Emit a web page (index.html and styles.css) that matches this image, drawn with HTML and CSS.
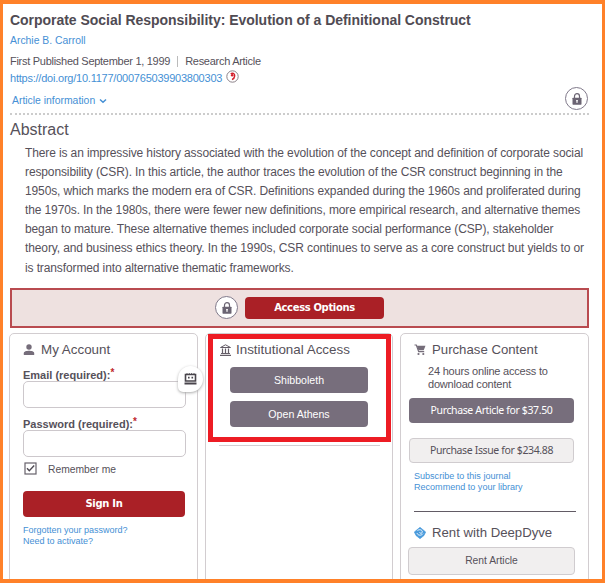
FILE: index.html
```html
<!DOCTYPE html>
<html lang="en">
<head>
<meta charset="utf-8">
<title>Corporate Social Responsibility</title>
<link rel="stylesheet" href="styles.css">
</head>
<body>
<svg width="0" height="0" class="defs">
  <symbol id="lock" viewBox="0 0 10 12"><path d="M2.500 5V3.200a2.500 2.500 0 0 1 5 0V5" fill="none" stroke="#6b6473" stroke-width="1.200"/><rect x=".5" y="4.700" width="9" height="7" rx=".6" fill="#6b6473"/><path d="M5 7v3M4 7.800h2" stroke="#fff" stroke-width="1"/></symbol>
</svg>
<main class="page">
  <h1><span>Corporate Social Responsibility: Evolution of a Definitional Construct</span></h1>
  <a class="author"><span>Archie B. Carroll</span></a>
  <p class="meta"><span class="pub">First Published September 1, 1999</span><i></i><span class="kind">Research Article</span></p>
  <div class="doi"><a>https://doi.org/10.1177/000765039903800303</a>
    <svg width="13" height="13" viewBox="0 0 13 13"><circle cx="6.500" cy="6.500" r="5.700" fill="#fff" stroke="#8b8188" stroke-width="1"/><path d="M4.800 4.200c1.300-1.800 4.200-1 3.900 1.700-.1 1.700-1.200 3-2.700 3.700" fill="none" stroke="#d21f2b" stroke-width="1.400"/><circle cx="6.200" cy="5.200" r="1.300" fill="#d21f2b"/></svg>
  </div>
  <div class="info"><a>Article information</a>
    <svg class="chev" width="8" height="6" viewBox="0 0 8 6"><path d="M1 1.500l3 2.800 3-2.800" fill="none" stroke="#4590d5" stroke-width="1.500"/></svg>
    <span class="lock"><svg width="10" height="12"><use href="#lock"/></svg></span>
  </div>
  <h2><span>Abstract</span></h2>
  <p class="abstract"><span>There is an impressive history associated with the evolution of the concept and definition of corporate social</span><br><span>responsibility (CSR). In this article, the author traces the evolution of the CSR construct beginning in the</span><br><span>1950s, which marks the modern era of CSR. Definitions expanded during the 1960s and proliferated during</span><br><span>the 1970s. In the 1980s, there were fewer new definitions, more empirical research, and alternative themes</span><br><span>began to mature. These alternative themes included corporate social performance (CSP), stakeholder</span><br><span>theory, and business ethics theory. In the 1990s, CSR continues to serve as a core construct but yields to or</span><br><span>is transformed into alternative thematic frameworks.</span></p>
  <div class="bar"><span class="lock"><svg width="10" height="12"><use href="#lock"/></svg></span><button class="access">Access Options</button></div>
  <div class="cards">
    <section class="card account">
      <h3><svg width="12" height="12" viewBox="0 0 12 12"><circle cx="6" cy="3" r="2.700" fill="#756d7a"/><path d="M.8 11V9.200C.8 7.500 3.500 6.800 6 6.800s5.200.7 5.200 2.400V11Z" fill="#756d7a"/></svg><span>My Account</span></h3>
      <label class="email">Email (required):<sup>*</sup></label>
      <div class="field"><span class="badge"><svg width="13" height="12" viewBox="0 0 13 12"><path d="M1.500 1.500h10v6.500h-10z" fill="#fff" stroke="#49454c" stroke-width="1.600"/><path d="M3 .2v1M5.300.2v1M7.600.2v1M10 .2v1" stroke="#49454c"/><path d="M4 4.700h1.600M7.500 4.700h1.600" stroke="#49454c" stroke-width="1.700"/><path d="M.5 9.500h12v2H.5z" fill="#49454c"/></svg></span></div>
      <label class="pass">Password (required):<sup>*</sup></label>
      <div class="field"></div>
      <div class="remember"><svg width="13" height="13" viewBox="0 0 13 13"><rect x="1" y="1" width="11" height="11" fill="#fff" stroke="#67616b" stroke-width="1.200"/><path d="M3 6.300l2.300 2.500L10.200 3.500" fill="none" stroke="#504b54" stroke-width="1.400"/></svg><span>Remember me</span></div>
      <button class="sign">Sign In</button>
      <div class="links"><a>Forgotten your password?</a><a>Need to activate?</a></div>
    </section>
    <section class="card inst">
      <div class="highlight"></div>
      <h3><svg width="11" height="12" viewBox="0 0 11 12"><path d="M.5 3.500L5.500.8l5 2.700Z" fill="none" stroke="#655e68"/><path d="M2.500 4.500v5M5.500 4.500v5M8.500 4.500v5M1 9.500h9M0 11.300h11" stroke="#655e68" stroke-width="1.200"/></svg><span>Institutional Access</span></h3>
      <button>Shibboleth</button>
      <button>Open Athens</button>
      <hr>
    </section>
    <section class="card buy">
      <h3><svg width="12" height="12" viewBox="0 0 12 12"><path d="M.5 1h1.800l2.400 6.700h5.500" fill="none" stroke="#756d7a" stroke-width="1.200"/><path d="M2.800 1.700h8.700L9.700 6.300H4.400Z" fill="#756d7a"/><circle cx="4.500" cy="10" r="1.100" fill="#756d7a"/><circle cx="9.300" cy="10" r="1.100" fill="#756d7a"/></svg><span>Purchase Content</span></h3>
      <p class="hours">24 hours online access to<br>download content</p>
      <button class="article">Purchase Article for $37.50</button>
      <button class="light issue">Purchase Issue for $234.88</button>
      <div class="links"><a>Subscribe to this journal</a><a>Recommend to your library</a></div>
      <hr>
      <h3 class="rent"><svg width="12" height="12" viewBox="0 0 12 12"><path d="M6 .3L11.700 5 10 8.500 6 11.700 2 8.500.3 5Z" fill="#4a9bdc" stroke="#4a9bdc" stroke-width=".6" stroke-linejoin="round"/><path d="M3.500 3.500c2-1.500 5-.6 4.800 1.500-.2 1.700-2.600 1.700-2.600.2M3 6.200c.7 2.300 4.400 2.700 6 .5" fill="none" stroke="#fff" stroke-width=".9"/></svg><span>Rent with DeepDyve</span></h3>
      <button class="light rentbtn">Rent Article</button>
    </section>
  </div>
</main>
</body>
</html>
```
FILE: styles.css
```css
* { box-sizing: border-box; }
body { margin: 0; font-family: "Liberation Sans", Arial, sans-serif; color: #56515a; overflow: hidden; }
.defs { position: absolute; }
.page { height: 583px; border: solid #ff8129; border-width: 4px 3px; padding: 8px 13px 0 7px; overflow: hidden; background: #fff; }
h1, h2, h3, p { margin: 0; font-weight: normal; white-space: nowrap; }
a { color: #4590d5; }
h1 { font-size: 14px; line-height: 16px; font-weight: bold; color: #504b53; letter-spacing: -.03px; }
.author { display: block; font-size: 10.4px; line-height: 14px; margin-top: 6px; }
.meta { display: flex; align-items: center; font-size: 11px; letter-spacing: -.28px; line-height: 14px; margin-top: 6px; }
.meta i { width: 1px; height: 11px; background: #bbb; margin: 0 7px; }
.doi { display: flex; align-items: center; gap: 4px; font-size: 11px; letter-spacing: -.23px; line-height: 14px; margin-top: 3px; }
.doi svg { margin-top: -4px; }
.info { display: flex; align-items: center; height: 29px; border-bottom: 2px dotted #ccc; margin-top: 1px; padding-left: 2px; font-size: 10.4px; }
.info a { padding-top: 1px; }
.chev { margin: 2px 0 0 4px; }
.lock { flex: none; width: 23px; height: 23px; border: 1px solid #80798a; border-radius: 50%; background: #fff; display: flex; align-items: center; justify-content: center; }
.info .lock { margin: -2px 1px 0 auto; }
h2 { font-size: 16px; line-height: 20px; margin-top: 5px; }
.abstract { margin: 4px 0 0 15px; font-size: 12px; letter-spacing: -.118px; line-height: 19.1px; }
.bar { height: 40px; margin: 10px 0 0; border: 2px solid #b94b50; background: #eee1e0; display: flex; align-items: center; padding-left: 203px; gap: 7px; }
button { display: block; padding: 0; border: 0; border-radius: 4px; color: #fff; background: #776e7c; font: 10.6px "Liberation Sans", sans-serif; white-space: nowrap; }
.bar .access { width: 139px; height: 22px; background: #aa2026; font: bold 10px "DejaVu Sans", sans-serif; letter-spacing: -.35px; }
.cards { display: grid; grid-template-columns: 189px 188px 189px; gap: 7px; margin: 5px -1px 0 -1px; height: 260px; }
.card { position: relative; border: 1px solid #d2cdd0; border-radius: 5px; }
h3 { display: flex; align-items: center; gap: 6px; font-size: 13.4px; line-height: 16px; }
.account { padding: 8px 12px 0 13px; }
label { display: block; font-size: 11px; font-weight: bold; line-height: 14px; white-space: nowrap; }
sup { color: #c0272d; line-height: 0; font-size: 10px; vertical-align: 3px; }
.email { margin-top: 10px; }
.pass { margin-top: 9px; }
.field { position: relative; height: 27px; border: 1px solid #cdc8cc; border-radius: 5px; margin-right: -1px; margin-top: -1px; }
.badge { position: absolute; left: 154px; top: -16px; width: 25px; height: 26px; border-radius: 50% 50% 50% 5px; background: #fff; box-shadow: 0 1px 3px #aaa; display: flex; align-items: center; justify-content: center; }
.remember { display: flex; align-items: center; gap: 11px; margin: 5px 0 0 1px; font-size: 10.3px; height: 14px; }
.remember span { padding-top: 1px; }
.sign { width: 162px; height: 26px; background: #aa2026; margin-top: 15px; font: bold 10px "DejaVu Sans", sans-serif; letter-spacing: -.3px; }
.links { font-size: 9px; line-height: 11px; margin-top: 8px; white-space: nowrap; }
.links a { display: block; }
.inst { padding: 8px 12px 0 14px; }
.inst button { width: 138px; height: 26px; margin: 9px 0 0 10px; }
.inst button + button { margin-top: 8px; }
.inst h3 { gap: 5px; }
.highlight { position: absolute; left: 2px; top: 0; width: 183px; height: 108px; border: 5px solid #ed1c24; }
hr { margin: 0; border: 0; }
.inst hr { height: 1px; background: #d2ced2; margin: 18px 0 0 -1px; width: 161px; }
.buy { padding: 8px 12px 0 13px; }
.buy h3 { font-size: 13.2px; }
.hours { font-size: 11px; letter-spacing: -.2px; line-height: 13px; margin: 7px 0 0 14px; }
.buy button { width: 165px; height: 25px; margin-left: -5px; }
.buy .article, .buy .issue { margin-top: 7px; font: 10.5px "Noto Sans", sans-serif; letter-spacing: -.37px; }
.buy .light { background: #f1efef; border: 1px solid #d0cccf; color: #56515a; }
.buy .issue { margin-top: 15px; }
.buy .links { font-size: 9.05px; margin-top: 8px; }
.buy hr { height: 1px; background: #625b65; width: 162px; margin-top: 18px; }
.buy .rent { margin-top: 13px; }
.buy .rentbtn { width: 167px; height: 28px; margin: 6px 0 0 -6px; font-size: 10.3px; }
```
